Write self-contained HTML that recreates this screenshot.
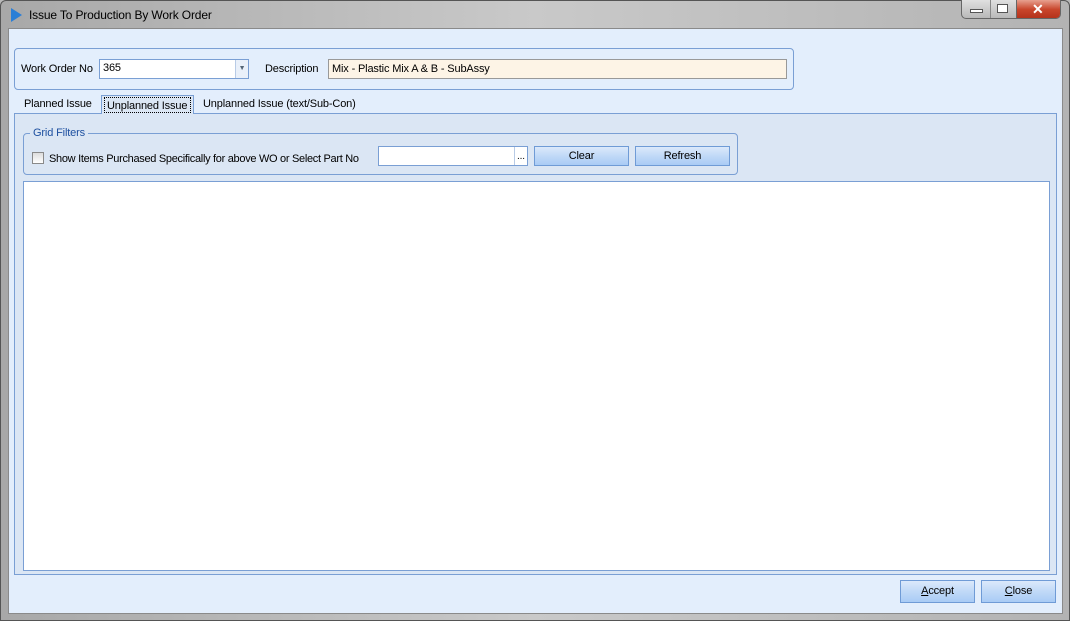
<html><head><style>
body{margin:0;width:1070px;height:621px;background:#b9b9b9;font-family:"Liberation Sans",sans-serif;font-size:11px;color:#000;position:relative;overflow:hidden;letter-spacing:-0.15px}
div{position:absolute;box-sizing:border-box;white-space:nowrap}
.btn{background:linear-gradient(#dbe9fb,#c0d9f7 50%,#a9cbf5);border:1px solid #6f9bd6;text-align:center;line-height:18px}
</style></head><body>
<div style="left:0;top:0;width:1070px;height:621px;background:linear-gradient(90deg,#a8a8a8,#c9c9c9 50%,#b3b3b3);border:1px solid #555;border-radius:6px 6px 0 0"></div>
<svg style="position:absolute;left:9px;top:7px" width="14" height="16"><path d="M2 1 L13 8 L2 15 Z" fill="#2b7fd6"/></svg>
<div style="left:29px;top:8px;font-size:12px">Issue To Production By Work Order</div>
<div style="left:961px;top:0;width:100px;height:19px;border:1px solid #666;border-top:0;border-radius:0 0 5px 5px;overflow:hidden;background:linear-gradient(#e0e0e0,#b8b8b8)">
<div style="left:54px;top:0;width:46px;height:19px;background:linear-gradient(#e7a08f,#c8452b 50%,#b2311a);border-left:1px solid #666"></div>
<div style="left:28px;top:0;width:1px;height:19px;background:#888"></div>
<div style="left:8px;top:9px;width:13px;height:4px;background:#fff;border:1px solid #555"></div>
<div style="left:35px;top:4px;width:11px;height:9px;border:1px solid #555;background:#fff"></div>
<div style="left:70px;top:1px;color:#fff;font-weight:bold;font-size:14px">✕</div>
</div>
<div style="left:8px;top:28px;width:1055px;height:586px;background:#e3eefc;border:1px solid #8a8a8a"></div>
<div style="left:14px;top:48px;width:780px;height:42px;border:1px solid #7a9fd4;border-radius:4px"></div>
<div style="left:21px;top:63px">Work Order No</div>
<div style="left:99px;top:59px;width:150px;height:20px;background:#fff;border:1px solid #7a9fd4;padding:2px 3px">365</div>
<div style="left:235px;top:60px;width:13px;height:18px;background:#e9f0fa;border-left:1px solid #b8cbe6;color:#567;font-size:7px;text-align:center;line-height:18px">▼</div>
<div style="left:265px;top:63px">Description</div>
<div style="left:328px;top:59px;width:459px;height:20px;background:#fdf4e6;border:1px solid #999;padding:3px 3px">Mix - Plastic Mix A &amp; B - SubAssy</div>
<div style="left:14px;top:113px;width:1043px;height:462px;background:#dbe6f4;border:1px solid #7a9fd4"></div>
<div style="left:24px;top:98px">Planned Issue</div>
<div style="left:101px;top:95px;width:93px;height:19px;background:#dbe6f4;border:1px solid #7a9fd4;border-bottom:0"></div>
<div style="left:104px;top:97px;width:87px;height:16px;border:1px dotted #000;padding:2px 2px;overflow:hidden">Unplanned Issue</div>
<div style="left:203px;top:98px">Unplanned Issue (text/Sub-Con)</div>
<div style="left:23px;top:133px;width:715px;height:42px;border:1px solid #7a9fd4;border-radius:4px"></div>
<div style="left:30px;top:127px;background:#dbe6f4;color:#1e50a0;padding:0 3px">Grid Filters</div>
<div style="left:32px;top:152px;width:12px;height:12px;border:1px solid #8a8a8a;background:linear-gradient(#ddd,#fff)"></div>
<div style="left:49px;top:153px;letter-spacing:-0.3px">Show Items Purchased Specifically for above WO or Select Part No</div>
<div style="left:378px;top:146px;width:150px;height:20px;background:#fff;border:1px solid #7a9fd4"></div>
<div style="left:514px;top:147px;width:13px;height:18px;border-left:1px solid #b8cbe6;font-size:10px;text-align:center;line-height:20px">...</div>
<div class="btn" style="left:534px;top:146px;width:95px;height:20px">Clear</div>
<div class="btn" style="left:635px;top:146px;width:95px;height:20px">Refresh</div>
<div style="left:23px;top:181px;width:1027px;height:390px;background:#fff;border:1px solid #7a9fd4"></div>
<div class="btn" style="left:900px;top:580px;width:75px;height:23px;line-height:21px"><u>A</u>ccept</div>
<div class="btn" style="left:981px;top:580px;width:75px;height:23px;line-height:21px"><u>C</u>lose</div>
</body></html>
